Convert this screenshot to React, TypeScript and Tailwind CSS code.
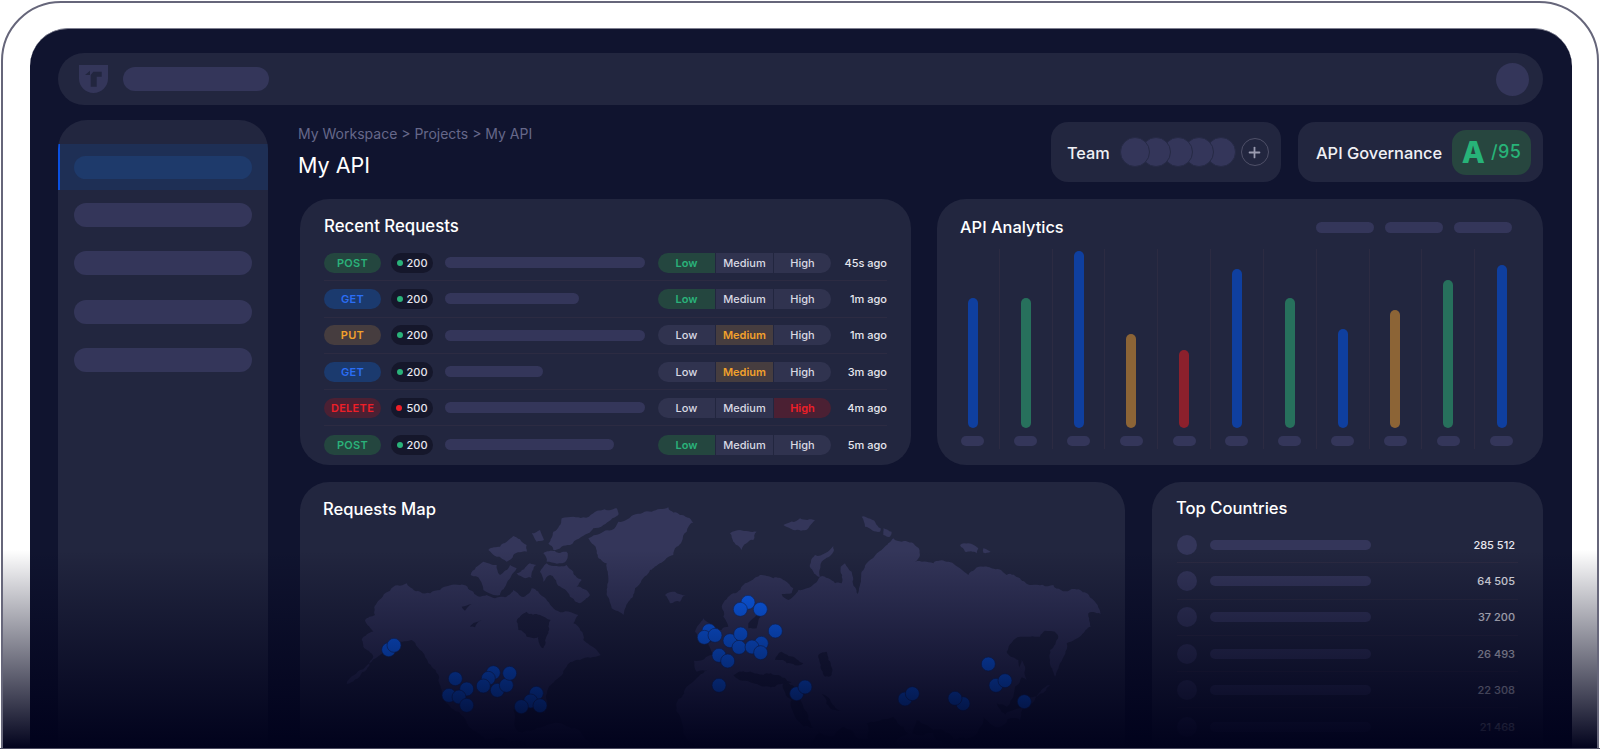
import { Plus } from 'lucide-react'

const requests = [
  { method: 'POST', status: '200', bar: 'w-[200px]', level: 'Low', time: '45s ago' },
  { method: 'GET', status: '200', bar: 'w-[134px]', level: 'Low', time: '1m ago' },
  { method: 'PUT', status: '200', bar: 'w-[200px]', level: 'Medium', time: '1m ago' },
  { method: 'GET', status: '200', bar: 'w-[98px]', level: 'Medium', time: '3m ago' },
  { method: 'DELETE', status: '500', bar: 'w-[200px]', level: 'High', time: '4m ago' },
  { method: 'POST', status: '200', bar: 'w-[169px]', level: 'Low', time: '5m ago' },
]

const methodStyles: Record<string, string> = {
  POST: 'bg-[#24463f] text-[#2ab27a]',
  GET: 'bg-[#1b3a6e] text-[#2b6ef5]',
  PUT: 'bg-[#463d3f] text-[#f2a12c]',
  DELETE: 'bg-[#4b2033] text-[#ee1f28]',
}

const levelStyles: Record<string, string> = {
  Low: 'bg-[#24463f] text-[#2ab27a] font-semibold',
  Medium: 'bg-[#463d3f] text-[#f2a12c] font-semibold',
  High: 'bg-[#4b2033] text-[#ee1f28] font-semibold',
}

const analytics = [
  { height: 'h-[130px]', color: 'bg-[#0f3f9f]' },
  { height: 'h-[130px]', color: 'bg-[#27705c]' },
  { height: 'h-[177px]', color: 'bg-[#0f3f9f]' },
  { height: 'h-[94px]', color: 'bg-[#8c6436]' },
  { height: 'h-[78px]', color: 'bg-[#8c202c]' },
  { height: 'h-[159px]', color: 'bg-[#0f3f9f]' },
  { height: 'h-[130px]', color: 'bg-[#27705c]' },
  { height: 'h-[99px]', color: 'bg-[#0f3f9f]' },
  { height: 'h-[118px]', color: 'bg-[#8c6436]' },
  { height: 'h-[148px]', color: 'bg-[#27705c]' },
  { height: 'h-[163px]', color: 'bg-[#0f3f9f]' },
]

const countries = ['285 512', '64 505', '37 200', '26 493', '22 308', '21 468']

// map traced in 3x units, left half starts at x=340 and right half at x=720 of the page
const westLand = [
  '745,115 790,95 815,90 835,65 880,45 935,35 985,22 1020,45 1060,68 1040,95 1025,125 1010,140 1000,165 960,190 930,210 905,240 885,265 870,300 850,345 815,325 800,285 805,240 800,190 770,160',
  '640,95 665,55 700,50 730,52 760,40 830,25 835,45 790,75 760,85 745,100 690,135 640,150 625,130',
  '445,150 480,140 500,125 520,108 540,118 560,135 560,155 520,165 500,185 470,170',
  '575,100 600,90 612,120 590,125',
  '610,160 680,155 680,180 620,185',
  '392,225 430,185 470,195 480,225 510,195 530,205 515,225 500,250 480,285 430,270 420,240',
  '530,220 570,190 590,195 575,235 555,235',
  '600,215 620,190 680,195 700,215 725,240 710,260 750,285 720,310 690,290 650,250 630,225 610,245',
  '975,285 1005,275 1038,285 1020,305 990,310',
  '75,362 105,345 110,310 150,272 200,250 240,275 300,270 360,255 400,275 420,290 440,285 465,295 490,290 520,270 545,290 575,265 610,290 640,325 700,340 715,345 700,370 730,420 770,450 782,465 720,480 680,500 660,530 625,565 620,600 615,640 570,620 520,630 525,680 590,720 560,735 500,720 440,720 380,670 320,610 295,540 265,490 240,450 215,420 170,425 120,465 20,552 100,470 70,440 65,420 100,395',
  '540,700 640,670 740,720 760,747 560,747',
  '1065,395 1090,355 1110,370 1130,420 1100,430',
]

const eastLand = [
  '30,100 60,90 110,95 100,120 65,150 40,125',
  '190,75 240,55 285,60 265,85 220,90',
  '272,205 285,165 340,138 342,150 305,185 300,230',
  '425,50 445,55 482,85 480,95 435,80',
  '490,85 515,95 510,110 490,105',
  '720,135 745,130 775,145 770,160 735,155',
  '790,145 812,155 790,158',
  '905,480 920,540 905,530',
  '925,590 990,555 935,612',
  '845,660 915,620 900,660',
  '10,350 5,320 40,280 75,250 120,225 160,235 220,265 215,280 185,282 205,300 235,270 260,265 300,230 325,235 345,250 365,250 362,200 375,190 395,215 405,262 412,282 418,262 425,215 440,190 490,145 520,115 545,125 590,140 600,165 585,185 640,190 680,185 720,205 745,225 790,200 860,225 900,235 935,255 1000,255 1050,270 1120,300 1145,345 1105,340 1112,380 1085,405 1040,430 1020,490 1005,530 990,480 990,450 1015,410 1005,395 975,392 960,410 900,410 860,455 895,480 905,520 885,560 880,590 860,620 830,610 862,660 840,680 790,650 770,700 700,720 640,690 590,660 565,720 520,650 440,670 445,715 370,680 345,705 285,690 250,620 200,540 130,525 50,520 -10,520 -20,510 -70,515 -78,482 -20,465 -35,430 -10,405 25,380',
  '-125,640 -100,560 -50,520 40,525 100,550 190,550 215,600 250,680 300,700 270,747 -60,747 -110,690',
  '530,720 640,700 720,747 540,747',
]

const waters = [
  { group: 'west', points: '530,365 560,335 600,345 632,360 625,400 610,445 595,410 560,410 535,390' },
  { group: 'west', points: '365,320 395,312 375,332' },
  { group: 'west', points: '390,380 425,362 405,382' },
  { group: 'east', points: '85,370 110,345 130,345 110,385 85,385' },
  { group: 'east', points: '165,480 185,455 220,470 250,490 200,490' },
  { group: 'east', points: '295,465 320,455 325,480 335,525 315,530 300,490' },
  { group: 'east', points: '50,520 130,525 215,548 170,555 100,545 60,540' },
  { group: 'east', points: '222,575 240,610 264,672 254,660 230,612' },
  { group: 'east', points: '305,582 330,598 362,632 345,630' },
]

const dots = [
  [-994, 449], [-978, 436], [-794, 536], [-760, 567], [-813, 586], [-783, 591], [-760, 616],
  [-680, 518], [-695, 535], [-710, 558], [-668, 571], [-641, 556], [-631, 520],
  [-551, 580], [-568, 603], [-540, 617], [-596, 620],
  [-33, 392], [-47, 412], [-15, 406], [84, 307], [61, 328], [121, 328], [166, 393], [30, 422],
  [62, 402], [57, 442], [124, 430], [96, 441], [122, 458], [-3, 466], [23, 483], [-3, 556],
  [230, 581], [255, 561], [555, 597], [577, 581], [729, 611], [705, 595], [805, 492], [828, 556], [855, 542], [913, 605],
]

// breaks long straight edges up so the coasts don't look like plain polygons
const roughen = (points: string) => {
  let coords = points.split(' ').map((pair) => pair.split(',').map(Number))
  for (let pass = 0; pass < 4; pass++) {
    const next: number[][] = []
    coords.forEach(([x, y], index) => {
      const [nx, ny] = coords[(index + 1) % coords.length]
      next.push([x, y])
      const length = Math.hypot(nx - x, ny - y)
      if (length > 9) {
        const seed = Math.sin(x * 12.9 + y * 78.2) * 43758.5
        const offset = (seed - Math.floor(seed) - 0.5) * length * 0.3
        next.push([(x + nx) / 2 + ((ny - y) / length) * offset, (y + ny) / 2 - ((nx - x) / length) * offset])
      }
    })
    coords = next
  }
  return coords.map(([x, y]) => `${x.toFixed(1)},${y.toFixed(1)}`).join(' ')
}

const WorldMap = () => {
  return (
    <svg viewBox="0 0 2340 747" className="absolute left-[40px] top-[18px] h-[249px] w-[780px]">
      <g fill="#34365a">
        {westLand.map((points) => (
          <polygon key={points} points={roughen(points)} />
        ))}
      </g>
      <g fill="#34365a" transform="translate(1140 0)">
        {eastLand.map((points) => (
          <polygon key={points} points={roughen(points)} />
        ))}
      </g>
      {waters.map((water) => (
        <polygon
          key={water.points}
          points={roughen(water.points)}
          fill="#21243f"
          transform={water.group === 'east' ? 'translate(1140 0)' : undefined}
        />
      ))}
      <g transform="translate(1140 0)" fill="#0d66ff" stroke="#17306e" strokeWidth="2">
        {dots.map(([cx, cy]) => (
          <circle key={`${cx}-${cy}`} cx={cx} cy={cy} r="21" />
        ))}
      </g>
    </svg>
  )
}

const Logo = () => {
  return (
    <svg viewBox="0 0 29 28" className="h-[28px] w-[29px]">
      <path d="M0 0H29V13.5C29 21.5 22.5 28 14.5 28S0 21.5 0 13.5Z" fill="#34365a" />
      <path d="M6 10 11 5.7V10ZM14.3 6.7H22.7V11.7H17.7V21.7H11.7V11.7H11.7V10Z" fill="#22263f" />
    </svg>
  )
}

const RecentRequests = () => {
  return (
    <section className="h-[266px] w-[611px] rounded-[29px] bg-[#22263f] px-[24px] pt-[17px]">
      <h2 className="mb-[9px] text-[16.8px] leading-[20px] font-medium text-white">Recent Requests</h2>
      {requests.map((request, index) => (
        <div
          key={index}
          className="flex h-[36.3px] items-center border-b border-[#2c2b42] text-[11px] leading-[14px] last:border-b-0"
        >
          <span className={`flex h-[20px] w-[57px] items-center justify-center rounded-full font-semibold tracking-[0.3px] ${methodStyles[request.method]}`}>
            {request.method}
          </span>
          <span className="ml-[10px] flex h-[20px] w-[42px] items-center justify-center gap-[4px] rounded-full bg-[#15172b] font-medium text-[#e6e6ee]">
            <span className={`size-[6px] rounded-full ${request.status === '500' ? 'bg-[#ee1f28]' : 'bg-[#2ab27a]'}`}></span>
            {request.status}
          </span>
          <div className="ml-[12px] w-[213px]">
            <div className={`h-[11px] rounded-full bg-[#34365a] ${request.bar}`}></div>
          </div>
          <div className="flex h-[20px] w-[173px] gap-px overflow-hidden rounded-full">
            {['Low', 'Medium', 'High'].map((level) => (
              <span
                key={level}
                className={`flex flex-1 items-center justify-center ${level === request.level ? levelStyles[level] : 'bg-[#30334f] font-medium text-[#d9d9e3]'}`}
              >
                {level}
              </span>
            ))}
          </div>
          <span className="ml-auto font-medium text-[#e6e6ee]">{request.time}</span>
        </div>
      ))}
    </section>
  )
}

const ApiAnalytics = () => {
  return (
    <section className="h-[266px] w-[606px] rounded-[29px] bg-[#22263f] pt-[18px] pr-[15px] pl-[10px]">
      <div className="flex items-center justify-between pr-[16px] pl-[13px]">
        <h2 className="text-[16.4px] leading-[20px] font-medium text-white">API Analytics</h2>
        <div className="flex gap-[11px]">
          <div className="h-[11px] w-[58px] rounded-full bg-[#34365a]"></div>
          <div className="h-[11px] w-[58px] rounded-full bg-[#34365a]"></div>
          <div className="h-[11px] w-[58px] rounded-full bg-[#34365a]"></div>
        </div>
      </div>
      <div className="mt-[12px] grid h-[200px] grid-cols-11">
        {analytics.map((bar, index) => (
          <div
            key={index}
            className="flex flex-col items-center justify-end border-r border-[#2c2b42] last:border-r-0"
          >
            <div className={`w-[10px] rounded-full ${bar.height} ${bar.color}`}></div>
            <div className="mt-[8px] mb-[3px] h-[10px] w-[23px] rounded-full bg-[#34365a]"></div>
          </div>
        ))}
      </div>
    </section>
  )
}

const TopCountries = () => {
  return (
    <section className="h-[320px] w-[391px] rounded-[29px] bg-[#22263f] px-[25px] pt-[16px]">
      <h2 className="mb-[9px] -ml-px text-[16.6px] leading-[20px] font-medium text-white">Top Countries</h2>
      {countries.map((count) => (
        <div key={count} className="flex h-[36.3px] items-center border-b border-[#2c2b42] last:border-b-0">
          <div className="size-[20px] rounded-full bg-[#34365a]"></div>
          <div className="ml-[13px] h-[10px] w-[161px] rounded-full bg-[#34365a]"></div>
          <span className="ml-auto pr-[3px] text-[11px] leading-[14px] font-medium text-[#e6e6ee]">{count}</span>
        </div>
      ))}
    </section>
  )
}

export default function App() {
  return (
    <div className="relative h-[749px] w-[1600px] overflow-hidden bg-white font-['Inter',sans-serif]">
      {/* Device frame */}
      <div className="mx-px mt-px h-[760px] rounded-t-[60px] border-2 border-[#66667a] pt-[25px] pr-[25px] pl-[27px]">
        <div className="h-full overflow-hidden rounded-t-[38px] border-t border-[#7e7f90] bg-[#10142f] pt-[24px] pr-[29px] pl-[28px]">
          {/* Top bar */}
          <header className="flex h-[52px] items-center rounded-full bg-[#22263f] pr-[14px] pl-[21px]">
            <Logo />
            <div className="ml-[15px] h-[24px] w-[146px] rounded-full bg-[#34365a]"></div>
            <div className="ml-auto size-[33px] rounded-full bg-[#34365a]"></div>
          </header>

          <div className="mt-[15px] flex">
            {/* Sidebar */}
            <aside className="h-[640px] w-[210px] shrink-0 overflow-hidden rounded-t-[29px] bg-[#22263f] pt-[24px]">
              <div className="flex h-[46px] items-center border-l-2 border-[#0a50e0] bg-[#1e2f55] pr-[16px] pl-[14px]">
                <div className="h-[23px] w-full rounded-full bg-[#1e3a6b]"></div>
              </div>
              <div className="flex flex-col gap-[24.4px] px-[16px] pt-[13px]">
                <div className="h-[24px] rounded-full bg-[#34365a]"></div>
                <div className="h-[24px] rounded-full bg-[#34365a]"></div>
                <div className="h-[24px] rounded-full bg-[#34365a]"></div>
                <div className="h-[24px] rounded-full bg-[#34365a]"></div>
              </div>
            </aside>

            <main className="ml-[32px] min-w-0 flex-1">
              {/* Page header */}
              <div className="flex h-[62px] items-start justify-between">
                <div className="-ml-[2px] pt-[5px]">
                  <p className="text-[14px] leading-[18px] text-[#66688a]">My Workspace &gt; Projects &gt; My API</p>
                  <h1 className="mt-[9px] text-[21.5px] leading-[27px] text-white">My API</h1>
                </div>
                <div className="mt-[2px] flex gap-[17px]">
                  <div className="flex h-[60px] w-[230px] items-center rounded-[17px] bg-[#22263f] pl-[16px]">
                    <span className="mt-[2px] text-[16.3px] font-medium text-[#f0f0f5]">Team</span>
                    <div className="ml-[10px] flex">
                      {[5, 4, 3, 2, 1].map((order) => (
                        <div
                          key={order}
                          className={`size-[30px] rounded-full border border-[#262a45] bg-[#34365a] not-first:-ml-[8.5px] ${order === 5 ? 'z-50' : order === 4 ? 'z-40' : order === 3 ? 'z-30' : order === 2 ? 'z-20' : 'z-10'}`}
                        ></div>
                      ))}
                    </div>
                    <div className="ml-[5px] flex size-[28px] items-center justify-center rounded-full border border-[#4f5068]">
                      <Plus size={17} strokeWidth={2.5} className="text-[#9a9bb0]" />
                    </div>
                  </div>
                  <div className="flex h-[60px] w-[245px] items-center rounded-[17px] bg-[#22263f] pl-[18px]">
                    <span className="mt-[2px] text-[16.4px] font-medium text-[#f0f0f5]">API Governance</span>
                    <div className="mr-[12px] ml-auto flex h-[45px] w-[79px] items-center justify-center gap-[6px] rounded-[14px] bg-[#27463f] text-[#27b378]">
                      <span className="text-[30px] leading-none font-extrabold">A</span>
                      <span className="text-[18px] leading-none font-medium tracking-[0.4px]">/95</span>
                    </div>
                  </div>
                </div>
              </div>

              {/* Top row */}
              <div className="mt-[17px] flex justify-between">
                <RecentRequests />
                <ApiAnalytics />
              </div>

              {/* Bottom row */}
              <div className="mt-[17px] flex justify-between">
                <section className="relative h-[320px] w-[825px] overflow-hidden rounded-[29px] bg-[#22263f] pt-[17px] pl-[23px]">
                  <WorldMap />
                  <h2 className="relative text-[16.6px] leading-[20px] font-medium text-white">Requests Map</h2>
                </section>
                <TopCountries />
              </div>
            </main>
          </div>
        </div>
      </div>

      {/* Fade towards the bottom */}
      <div className="absolute inset-x-[3px] top-[550px] bottom-0 bg-linear-to-b from-[#01021c00] to-[#01021c] to-[100%]"></div>
      <div className="absolute inset-x-0 bottom-0 h-px bg-[#4b4b60]"></div>
    </div>
  )
}
